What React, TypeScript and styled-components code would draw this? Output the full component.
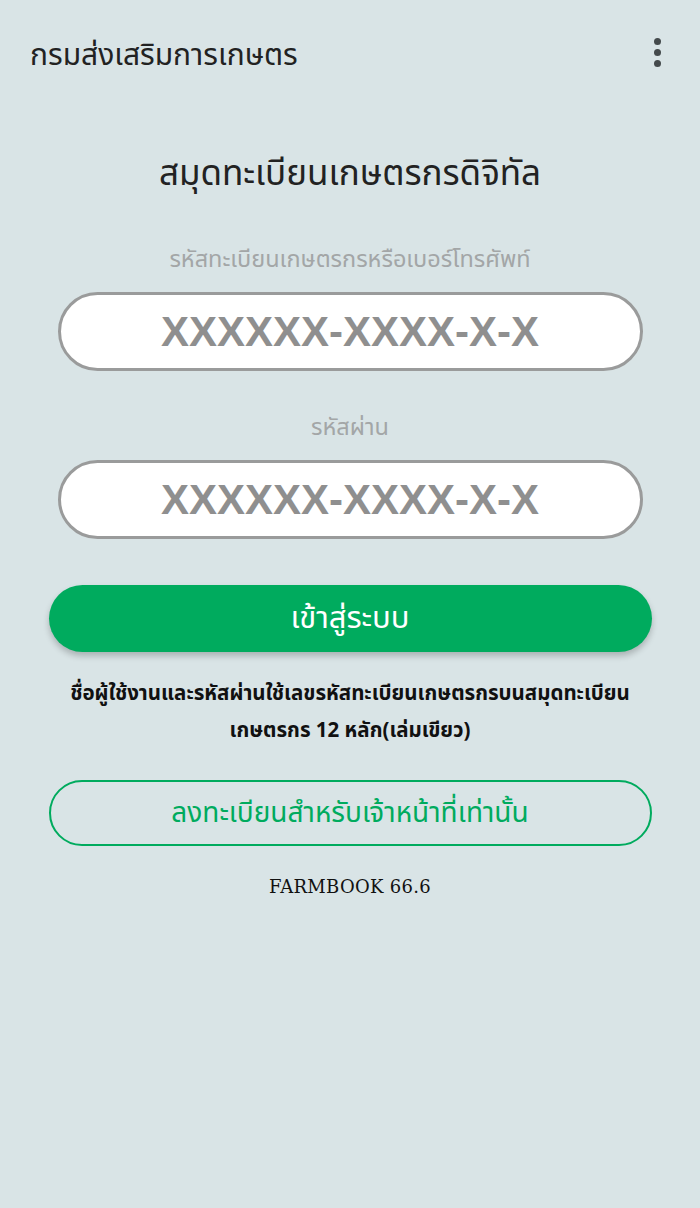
import React, { useState } from "react";
import styled, { createGlobalStyle } from "styled-components";

const colors = {
  page: "#d9e4e6",
  text: "#222222",
  muted: "#a3a6a7",
  field: "#8f8f8f",
  green: "#00ab5e",
};

const GlobalStyle = createGlobalStyle`
  html, body {
    margin: 0;
    padding: 0;
    background: ${colors.page};
  }
  body {
    font-family: "Noto Sans Thai", "Noto Sans", "DejaVu Sans", sans-serif;
    color: ${colors.text};
  }
`;

const Screen = styled.div`
  min-height: 1208px;
  background: ${colors.page};
  display: flex;
  flex-direction: column;
`;

const TopBar = styled.header`
  height: 112px;
  display: flex;
  align-items: flex-start;
  justify-content: space-between;
  padding: 36px 31px 0 30px;
  box-sizing: border-box;
`;

const TopTitle = styled.h1`
  margin: 0;
  font-size: 30px;
  font-weight: 400;
  line-height: 40px;
  color: ${colors.text};
`;

const MenuButton = styled.button`
  width: 24px;
  height: 40px;
  border: none;
  background: transparent;
  padding: 0;
  margin-top: -4px;
  display: flex;
  flex-direction: column;
  align-items: center;
  justify-content: center;
  gap: 4px;
  cursor: pointer;
`;

const Dot = styled.span`
  width: 7px;
  height: 7px;
  border-radius: 50%;
  background: #444a4c;
`;

const Form = styled.main`
  display: flex;
  flex-direction: column;
  align-items: center;
  padding: 40px 48px 0 48px;
`;

const Heading = styled.h2`
  margin: 0;
  font-size: 35px;
  font-weight: 400;
  line-height: 46px;
  color: ${colors.text};
`;

const Label = styled.label<{ $top: number }>`
  margin-top: ${(p) => p.$top}px;
  font-size: 23.5px;
  line-height: 30px;
  color: ${colors.muted};
`;

const Field = styled.input`
  margin-top: 17px;
  width: 585px;
  height: 79px;
  box-sizing: border-box;
  border: 3px solid #9a9b9b;
  border-radius: 40px;
  background: #ffffff;
  text-align: center;
  font-family: "Liberation Sans", Arial, sans-serif;
  font-size: 42px;
  font-weight: 700;
  color: ${colors.field};
  outline: none;

  &::placeholder {
    color: ${colors.field};
    opacity: 1;
  }
`;

const PrimaryButton = styled.button`
  margin-top: 46px;
  width: 603px;
  height: 67px;
  border: none;
  border-radius: 34px;
  background: ${colors.green};
  color: #ffffff;
  font-family: inherit;
  font-size: 31px;
  box-shadow: 0 4px 6px rgba(0, 0, 0, 0.22);
  cursor: pointer;
`;

const Note = styled.p`
  margin: 23px 0 0;
  text-align: center;
  font-size: 20.5px;
  font-weight: 700;
  line-height: 37px;
  color: #111111;
`;

const OutlineButton = styled.button`
  margin-top: 31px;
  width: 603px;
  height: 66px;
  box-sizing: border-box;
  border: 2px solid ${colors.green};
  border-radius: 33px;
  background: transparent;
  color: ${colors.green};
  font-family: inherit;
  font-size: 28px;
  cursor: pointer;
`;

const Version = styled.div`
  margin-top: 29px;
  font-family: "DejaVu Serif", "Liberation Serif", serif;
  font-size: 18px;
  line-height: 24px;
  letter-spacing: 0.3px;
  color: #111111;
`;

export default function App() {
  const [user, setUser] = useState("");
  const [pass, setPass] = useState("");

  return (
    <Screen>
      <GlobalStyle />
      <TopBar>
        <TopTitle>กรมส่งเสริมการเกษตร</TopTitle>
        <MenuButton aria-label="more">
          <Dot />
          <Dot />
          <Dot />
        </MenuButton>
      </TopBar>
      <Form>
        <Heading>สมุดทะเบียนเกษตรกรดิจิทัล</Heading>
        <Label $top={47}>รหัสทะเบียนเกษตรกรหรือเบอร์โทรศัพท์</Label>
        <Field
          placeholder="XXXXXX-XXXX-X-X"
          value={user}
          onChange={(e) => setUser(e.target.value)}
        />
        <Label $top={42}>รหัสผ่าน</Label>
        <Field
          placeholder="XXXXXX-XXXX-X-X"
          value={pass}
          onChange={(e) => setPass(e.target.value)}
        />
        <PrimaryButton>เข้าสู่ระบบ</PrimaryButton>
        <Note>
          ชื่อผู้ใช้งานและรหัสผ่านใช้เลขรหัสทะเบียนเกษตรกรบนสมุดทะเบียน
          <br />
          เกษตรกร 12 หลัก(เล่มเขียว)
        </Note>
        <OutlineButton>ลงทะเบียนสำหรับเจ้าหน้าที่เท่านั้น</OutlineButton>
        <Version>FARMBOOK 66.6</Version>
      </Form>
    </Screen>
  );
}
